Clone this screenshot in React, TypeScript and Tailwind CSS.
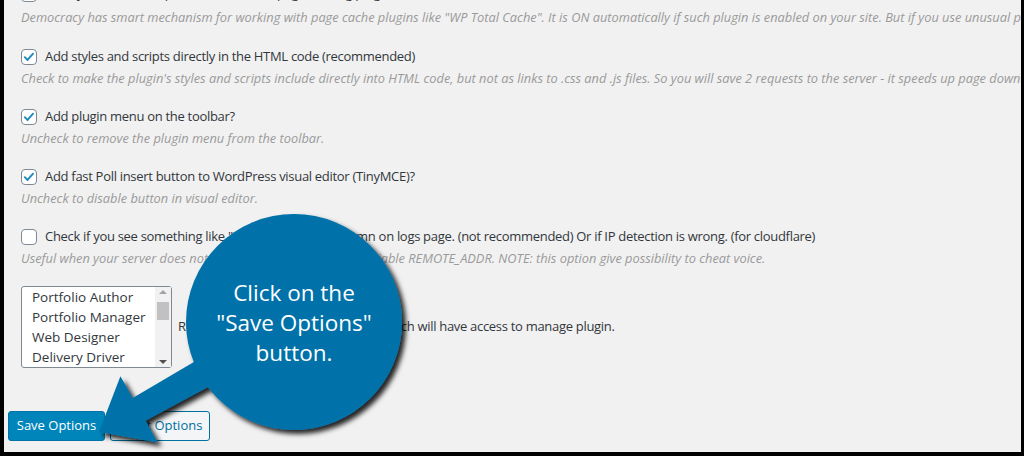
const font = { fontFamily: '"Segoe UI", "Open Sans", "Noto Sans", sans-serif' };

const options = [
  {
    label: "Use AJAX to load the poll, if the site uses page caching plugins",
    desc: 'Democracy has smart mechanism for working with page cache plugins like "WP Total Cache". It is ON automatically if such plugin is enabled on your site. But if you use unusual page cache plugin you can force enable this option.',
    checked: true,
  },
  {
    label: "Add styles and scripts directly in the HTML code (recommended)",
    desc: "Check to make the plugin's styles and scripts include directly into HTML code, but not as links to .css and .js files. So you will save 2 requests to the server - it speeds up page download.",
    checked: true,
  },
  {
    label: "Add plugin menu on the toolbar?",
    desc: "Uncheck to remove the plugin menu from the toolbar.",
    checked: true,
  },
  {
    label: "Add fast Poll insert button to WordPress visual editor (TinyMCE)?",
    desc: "Uncheck to disable button in visual editor.",
    checked: true,
  },
  {
    label:
      'Check if you see something like "no_IP__123" in IP column on logs page. (not recommended) Or if IP detection is wrong. (for cloudflare)',
    desc: "Useful when your server does not work correctly with server variable REMOTE_ADDR. NOTE: this option give possibility to cheat voice.",
    checked: false,
  },
];

const roles = ["Portfolio Author", "Portfolio Manager", "Web Designer", "Delivery Driver"];

function Checkbox({ checked }: { checked: boolean }) {
  return (
    <span className="flex h-[16px] w-[16px] shrink-0 items-center justify-center rounded-[4px] border border-[#7e8993] bg-white">
      {checked && (
        <svg viewBox="0 0 16 16" className="h-[14px] w-[14px]">
          <path d="M3.2 8.2 L6.4 11.4 L12.6 4.2" fill="none" stroke="#1e8cbe" strokeWidth="2.2" strokeLinecap="round" strokeLinejoin="round" />
        </svg>
      )}
    </span>
  );
}

function Callout() {
  return (
    <svg className="pointer-events-none absolute left-0 top-0" width="1024" height="456" viewBox="0 0 1024 456">
      <defs>
        <filter id="shadow" x="-20%" y="-20%" width="140%" height="140%">
          <feDropShadow dx="4" dy="4" stdDeviation="2.5" floodColor="#000" floodOpacity="0.85" />
        </filter>
      </defs>
      <g filter="url(#shadow)" fill="#0172a9">
        <polygon
          transform="translate(99 432) rotate(-29.4)"
          points="0,0 46,-38 46,-13 200,-16 200,16 46,13 46,38"
        />
        <circle cx="294" cy="322" r="108" />
      </g>
      <g fill="#ffffff" fontSize="22.5" textAnchor="middle" style={font}>
        <text x="294" y="301">Click on the</text>
        <text x="294" y="331">"Save Options"</text>
        <text x="294" y="361">button.</text>
      </g>
    </svg>
  );
}

export default function App() {
  return (
    <div className="relative h-[456px] w-[1024px] overflow-hidden bg-black pb-[4px] pl-[4px] pr-[3px]" style={font}>
      <div className="h-full overflow-hidden bg-[#f1f1f1] pl-[4px]">
        <div className="-mt-[17px] pl-[13px]">
          {options.map((o, i) => (
            <div key={o.label} className={i === 0 ? "mb-[17px]" : "mb-[16px]"}>
              <div className="flex h-[22px] items-center gap-[8px] whitespace-nowrap text-[13px] tracking-[-0.3px] text-[#32373c]">
                <Checkbox checked={o.checked} />
                <span>{o.label}</span>
              </div>
              <div
                className={
                  i === 0
                    ? "mt-[2px] flex h-[22px] items-center whitespace-nowrap text-[12.8px] italic text-[#9a9a9a]"
                    : "flex h-[22px] items-center whitespace-nowrap text-[12.8px] italic text-[#9a9a9a]"
                }
              >
                {o.desc}
              </div>
            </div>
          ))}

          <div className="mt-[2px] flex items-center gap-[6px]">
            <div className="flex h-[82px] w-[151px] rounded-[3px] border border-[#7e8993] bg-white">
              <div className="flex-1 pl-[10px] text-[13.5px] text-[#32373c]">
                {roles.map((r) => (
                  <div key={r} className="flex h-[20px] items-center whitespace-nowrap">
                    {r}
                  </div>
                ))}
              </div>
              <div className="flex w-[16px] flex-col items-center bg-[#f1f1f1] py-[3px]">
                <span className="h-0 w-0 border-x-[4px] border-b-[4px] border-x-transparent border-b-[#a3a3a3]" />
                <span className="mt-[8px] h-[18px] w-[12px] bg-[#c1c1c1]" />
                <span className="flex-1" />
                <span className="h-0 w-0 border-x-[4px] border-t-[4px] border-x-transparent border-t-[#505050]" />
              </div>
            </div>
            <span className="whitespace-nowrap text-[13px] tracking-[-0.3px] text-[#32373c]">
              Role names, except 'administrator' which will have access to manage plugin.
            </span>
          </div>
        </div>

        <div className="mt-[43px] flex gap-[5px] text-[13px]">
          <button className="h-[30px] w-[97px] rounded-[3px] border border-[#0073aa] bg-[#0085ba] text-white">
            Save Options
          </button>
          <button className="h-[30px] w-[100px] rounded-[3px] border border-[#0071a1] bg-[#f3f5f6] text-[#0071a1]">
            Reset Options
          </button>
        </div>
      </div>
      <Callout />
    </div>
  );
}
